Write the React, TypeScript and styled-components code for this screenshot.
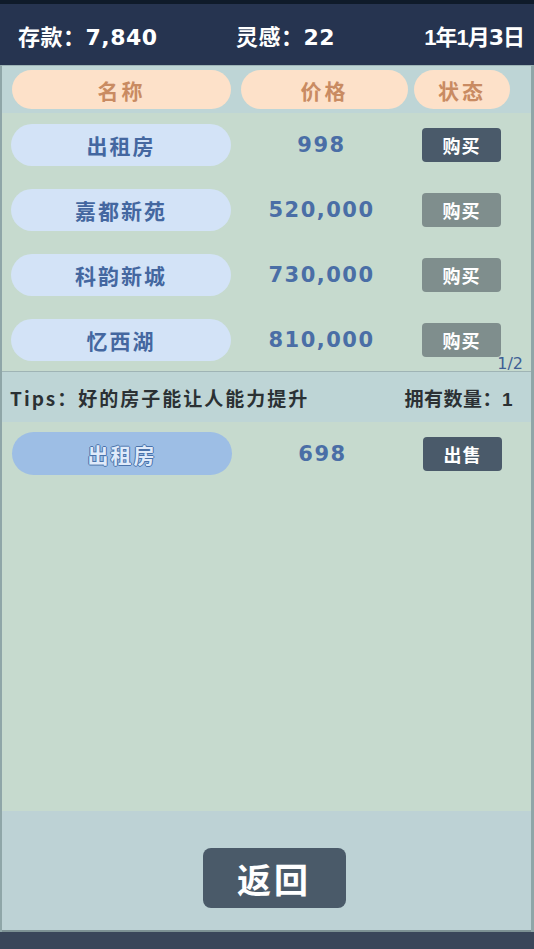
import React from 'react';
import styled, { createGlobalStyle } from 'styled-components';

type House = { name: string; price: string; active: boolean };

const shopList: House[] = [
  { name: '出租房', price: '998', active: true },
  { name: '嘉都新苑', price: '520,000', active: false },
  { name: '科韵新城', price: '730,000', active: false },
  { name: '忆西湖', price: '810,000', active: false },
];

const owned: House[] = [{ name: '出租房', price: '698', active: true }];

const App = () => {
  return (
    <Page>
      <GlobalStyle />
      <TopBar>
        <Stat>
          存款：<Num>7,840</Num>
        </Stat>
        <Stat>
          灵感：<Num>22</Num>
        </Stat>
        <Stat $tight>
          <Num $narrow>1</Num>年<Num $narrow>1</Num>月<Num>3</Num>日
        </Stat>
      </TopBar>

      <Main>
        <HeaderRow>
          <HeadPill $w={219}>名称</HeadPill>
          <HeadPill $w={167} $ml={10}>
            价格
          </HeadPill>
          <HeadPill $w={96} $ml={6}>
            状态
          </HeadPill>
        </HeaderRow>

        <ShopList>
          {shopList.map((h) => (
            <Row key={h.name}>
              <NamePill>{h.name}</NamePill>
              <Price>{h.price}</Price>
              <ActionButton $active={h.active}>购买</ActionButton>
            </Row>
          ))}
          <Pager>1/2</Pager>
        </ShopList>

        <TipsBar>
          <TipText>Tips：好的房子能让人能力提升</TipText>
          <span>
            拥有数量：<Num $narrow>1</Num>
          </span>
        </TipsBar>

        <OwnedList>
          {owned.map((h) => (
            <OwnedRow key={h.name}>
              <NamePill $owned>{h.name}</NamePill>
              <Price>{h.price}</Price>
              <ActionButton $active>出售</ActionButton>
            </OwnedRow>
          ))}
        </OwnedList>

        <Footer>
          <BackButton>返回</BackButton>
        </Footer>
      </Main>

      <BottomBar />
    </Page>
  );
};

export default App;

const GlobalStyle = createGlobalStyle`
  html, body {
    margin: 0;
    padding: 0;
    background: #c6dace;
  }
  body {
    font-family: "Noto Sans CJK SC", "Noto Sans", sans-serif;
  }
`;

const Page = styled.div`
  width: 534px;
  height: 949px;
  display: flex;
  flex-direction: column;
  overflow: hidden;
`;

const TopBar = styled.div`
  height: 61px;
  border-top: 4px solid #0f1b2a;
  background: #263450;
  display: grid;
  grid-template-columns: 218px 1fr auto;
  align-items: center;
  padding: 0 10px 0 18px;
  color: #fff;
  font-size: 22px;
  font-weight: 700;
`;

const Stat = styled.div<{ $tight?: boolean }>`
  display: flex;
  align-items: baseline;
  letter-spacing: ${(p) => (p.$tight ? '-1px' : '0.5px')};
`;

const Num = styled.span<{ $narrow?: boolean }>`
  font-family: ${(p) => (p.$narrow ? '"Liberation Sans"' : '"DejaVu Sans"')}, sans-serif;
  font-weight: 700;
`;

const Main = styled.div`
  flex: 1;
  display: flex;
  flex-direction: column;
  border-left: 2px solid #8fa6a8;
  border-right: 3px solid #8fa6a8;
  border-top: 1px solid #9db4b6;
`;

const HeaderRow = styled.div`
  height: 47px;
  box-sizing: border-box;
  background: #bed5d6;
  padding: 4px 0 0 10px;
  display: flex;
  align-items: flex-start;
`;

const HeadPill = styled.div<{ $w: number; $ml?: number }>`
  width: ${(p) => p.$w}px;
  margin-left: ${(p) => p.$ml || 0}px;
  height: 39px;
  border-radius: 20px;
  background: #fde1c9;
  color: #c98b62;
  font-size: 21px;
  font-weight: 700;
  letter-spacing: 3px;
  display: flex;
  align-items: center;
  justify-content: center;
`;

const ShopList = styled.div`
  height: 259px;
  box-sizing: border-box;
  background: #c6dace;
  padding: 11px 0 0 9px;
  display: flex;
  flex-direction: column;
  gap: 23px;
  position: relative;
  border-bottom: 1px solid #9fb4b5;
`;

const Row = styled.div`
  display: grid;
  grid-template-columns: 220px 191px 79px;
  align-items: center;
  height: 42px;
`;

const OwnedRow = styled(Row)`
  height: 43px;
`;

const NamePill = styled.div<{ $owned?: boolean }>`
  height: 100%;
  border-radius: 22px;
  background: ${(p) => (p.$owned ? '#9dbee5' : '#d3e3f7')};
  color: ${(p) => (p.$owned ? '#dfeafa' : '#4467a0')};
  text-shadow: ${(p) =>
    p.$owned
      ? '1px 0 0 #4a72aa, -1px 0 0 #4a72aa, 0 1px 0 #4a72aa, 0 -1px 0 #4a72aa'
      : 'none'};
  font-size: 21px;
  font-weight: 700;
  letter-spacing: 2px;
  display: flex;
  align-items: center;
  justify-content: center;
`;

const Price = styled.div`
  text-align: center;
  padding-right: 10px;
  color: #4a6ea6;
  font-family: "DejaVu Sans", sans-serif;
  font-weight: 700;
  font-size: 21px;
  letter-spacing: 1.5px;
`;

const ActionButton = styled.div<{ $active?: boolean }>`
  height: 34px;
  border-radius: 4px;
  background: ${(p) => (p.$active ? '#4a5a6a' : '#7f8e8d')};
  color: #fff;
  font-size: 18px;
  font-weight: 700;
  letter-spacing: 1px;
  display: flex;
  align-items: center;
  justify-content: center;
`;

const Pager = styled.div`
  position: absolute;
  right: 8px;
  bottom: -2px;
  color: #3f5f95;
  font-family: "DejaVu Sans", sans-serif;
  font-size: 16px;
  font-weight: 400;
`;

const TipsBar = styled.div`
  height: 50px;
  background: #bed5d6;
  display: flex;
  align-items: center;
  justify-content: space-between;
  padding: 0 18px 0 8px;
  color: #2b3134;
  font-size: 19px;
  font-weight: 700;
  letter-spacing: 0.5px;
`;

const TipText = styled.span`
  letter-spacing: 2px;
`;

const OwnedList = styled.div`
  height: 389px;
  box-sizing: border-box;
  background: #c6dace;
  padding: 10px 0 0 10px;
  display: flex;
  flex-direction: column;
`;

const Footer = styled.div`
  flex: 1;
  background: #bdd2d5;
  display: flex;
  justify-content: center;
  padding-top: 37px;
  border-bottom: 2px solid #7d9194;
`;

const BackButton = styled.div`
  width: 143px;
  height: 60px;
  border-radius: 8px;
  background: #4a5a69;
  color: #fff;
  font-size: 34px;
  font-weight: 700;
  letter-spacing: 3px;
  display: flex;
  align-items: center;
  justify-content: center;
  margin-left: 15px;
`;

const BottomBar = styled.div`
  height: 17px;
  background: #3a465a;
`;
